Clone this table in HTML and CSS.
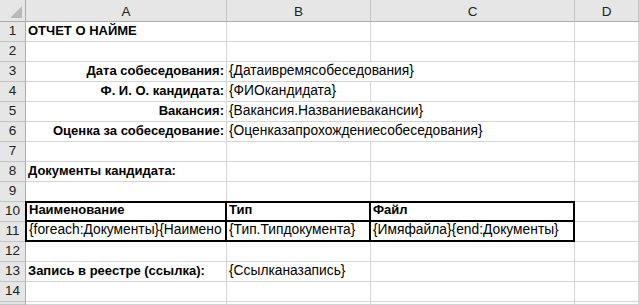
FILE: index.html
```html
<!DOCTYPE html>
<html lang="ru">
<head>
<meta charset="utf-8">
<link rel="stylesheet" href="styles.css">
</head>
<body>
<div class="sheet">
  <div class="corner"><span class="tri"></span></div>
  <div class="ch">A</div>
  <div class="ch">B</div>
  <div class="ch">C</div>
  <div class="ch">D</div>

  <div class="rh">1</div>
  <div class="c b">ОТЧЕТ О НАЙМЕ</div><div class="c"></div><div class="c"></div><div class="c"></div>

  <div class="rh">2</div>
  <div class="c"></div><div class="c"></div><div class="c"></div><div class="c"></div>

  <div class="rh">3</div>
  <div class="c b r">Дата собеседования:</div><div class="c s2">{Датаивремясобеседования}</div><div class="c"></div>

  <div class="rh">4</div>
  <div class="c b r">Ф. И. О. кандидата:</div><div class="c">{ФИОкандидата}</div><div class="c"></div><div class="c"></div>

  <div class="rh">5</div>
  <div class="c b r">Вакансия:</div><div class="c s2">{Вакансия.Названиевакансии}</div><div class="c"></div>

  <div class="rh">6</div>
  <div class="c b r">Оценка за собеседование:</div><div class="c s2">{Оценказапрохождениесобеседования}</div><div class="c"></div>

  <div class="rh">7</div>
  <div class="c"></div><div class="c"></div><div class="c"></div><div class="c"></div>

  <div class="rh">8</div>
  <div class="c b">Документы кандидата:</div><div class="c"></div><div class="c"></div><div class="c"></div>

  <div class="rh">9</div>
  <div class="c"></div><div class="c"></div><div class="c"></div><div class="c"></div>

  <div class="rh">10</div>
  <div class="c b t-top t-left">Наименование</div><div class="c b t-top">Тип</div><div class="c b t-top t-right">Файл</div><div class="c"></div>

  <div class="rh">11</div>
  <div class="c t-bot t-left clip"><span>{foreach:Документы}{Наимено</span></div><div class="c t-bot">{Тип.Типдокумента}</div><div class="c t-bot t-right">{Имяфайла}{end:Документы}</div><div class="c"></div>

  <div class="rh">12</div>
  <div class="c"></div><div class="c"></div><div class="c"></div><div class="c"></div>

  <div class="rh">13</div>
  <div class="c b">Запись в реестре (ссылка):</div><div class="c">{Ссылканазапись}</div><div class="c"></div><div class="c"></div>

  <div class="rh">14</div>
  <div class="c"></div><div class="c"></div><div class="c"></div><div class="c"></div>

  <div class="rh"></div>
  <div class="c"></div><div class="c"></div><div class="c"></div><div class="c"></div>
</div>
</body>
</html>
```
FILE: styles.css
```css
* { box-sizing: border-box; }
html, body { margin: 0; padding: 0; background: #fff; overflow: hidden; }
body { width: 639px; height: 305px; }

.sheet {
  display: grid;
  grid-template-columns: 26px 201px 144px 204px 64px;
  grid-template-rows: 22px repeat(14, 20px) 3px;
  font-family: "Liberation Sans", Arial, sans-serif;
  font-size: 13.8px;
  color: #000;
}

.corner {
  background: #e6e6e6;
  border-right: 1px solid #ababab;
  border-bottom: 1px solid #ababab;
  position: relative;
}
.tri {
  position: absolute;
  right: 3px;
  bottom: 3px;
  width: 0;
  height: 0;
  border-left: 12px solid transparent;
  border-bottom: 12px solid #b9b9b9;
}

.ch {
  background: #e6e6e6;
  border-right: 1px solid #c4c4c4;
  border-bottom: 1px solid #ababab;
  display: flex;
  align-items: center;
  justify-content: center;
  color: #222;
  font-size: 13.5px;
  padding-top: 1px;
}

.rh {
  background: #e6e6e6;
  border-right: 1px solid #ababab;
  border-bottom: 1px solid #c4c4c4;
  display: flex;
  align-items: flex-end;
  justify-content: center;
  padding-bottom: 2px;
  color: #222;
  font-size: 13.5px;
  line-height: 16px;
}

.c {
  border-right: 1px solid #d4d4d4;
  border-bottom: 1px solid #d4d4d4;
  display: flex;
  align-items: flex-end;
  padding: 0 2px 2px 2px;
  white-space: nowrap;
  overflow: hidden;
  line-height: 16px;
}
.b { font-weight: bold; font-size: 13px; }
.r { justify-content: flex-end; }
.s2 { grid-column: span 2; }

.t-top { border-top: 2px solid #000; border-bottom: 2px solid #000; margin-top: -1px; }
.t-bot { border-bottom: 2px solid #000; border-right: 2px solid #000; }
.t-top.b { border-right: 2px solid #000; }
.t-left { border-left: 2px solid #000; margin-left: -1px; }
.t-right { border-right: 2px solid #000; }
```
